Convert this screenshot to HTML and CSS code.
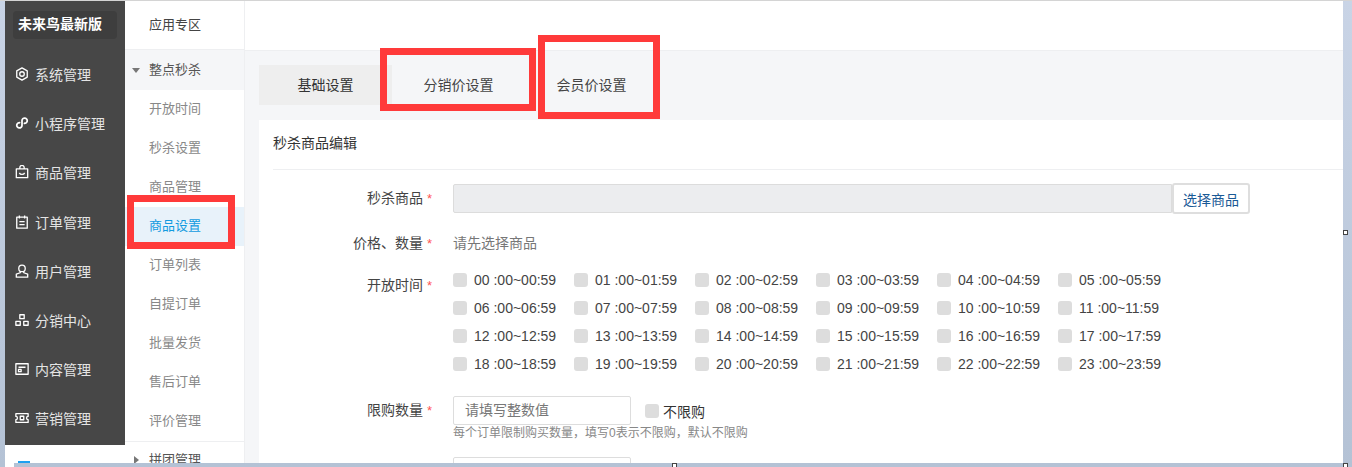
FILE: index.html
```html
<!DOCTYPE html>
<html lang="zh-CN">
<head>
    <meta charset="UTF-8">
    <meta name="viewport" content="width=device-width, initial-scale=1.0">
    <title>秒杀商品编辑</title>
    <link rel="stylesheet" href="styles.css">
</head>
<body>
    <div class="window">
        <!-- Sidebar -->
        <div class="side">
            <div class="side-dark">
                <div class="logo">未来鸟最新版</div>
                <ul class="side-menu">
                    <li>
                        <svg viewBox="0 0 16 16"><path d="M8 1l6 3.500v7L8 15l-6-3.500v-7z"/><circle cx="8" cy="8" r="2.600"/></svg>
                        系统管理
                    </li>
                    <li>
                        <svg viewBox="0 0 16 16"><path d="M6 7.800A3 3 0 1 0 8 10.700V5.300A3 3 0 1 1 10 8.200" stroke-width="2"/></svg>
                        小程序管理
                    </li>
                    <li>
                        <svg viewBox="0 0 16 16"><path d="M1.500 4.500h13v10h-13z"/><path d="M5.500 4.500V3a2.500 2.500 0 0 1 5 0v1.500"/><path d="M5 9c1 2.400 5 2.400 6 0"/></svg>
                        商品管理
                    </li>
                    <li>
                        <svg viewBox="0 0 16 16"><path d="M2 2.500h12v12.500H2z"/><path d="M5 .5v3.500M11 .5v3.500M5 7.500h6M5 11h6"/></svg>
                        订单管理
                    </li>
                    <li>
                        <svg viewBox="0 0 16 16"><circle cx="8" cy="5" r="3.700"/><path d="M6 8.500v1.500L1.500 11.500v3.500h13v-3.500L10 10V8.500"/></svg>
                        用户管理
                    </li>
                    <li>
                        <svg viewBox="0 0 16 16"><path d="M5.500 2h5v4.500h-5zM1 9.500h5v4.500H1zM10 9.500h5v4.500h-5z"/></svg>
                        分销中心
                    </li>
                    <li>
                        <svg viewBox="0 0 16 16"><path d="M1 2h14v12H1z"/><path d="M4 6h8M4 8.500h3v2.500H4z"/></svg>
                        内容管理
                    </li>
                    <li>
                        <svg viewBox="0 0 16 16"><path d="M1 3h14v3.200a1.800 1.800 0 0 0 0 3.600V13H1V9.800a1.800 1.800 0 0 0 0-3.600z"/><path d="M6 6h4v4H6z"/></svg>
                        营销管理
                    </li>
                </ul>
            </div>
            <div class="side-more"></div>
        </div>

        <!-- Sub menu -->
        <div class="subnav">
            <div class="subnav-head">应用专区</div>
            <div class="subnav-group open"><i class="arrow-down"></i>整点秒杀</div>
            <a class="subnav-item" href="#">开放时间</a>
            <a class="subnav-item" href="#">秒杀设置</a>
            <a class="subnav-item" href="#">商品管理</a>
            <a class="subnav-item active" href="#">商品设置</a>
            <a class="subnav-item" href="#">订单列表</a>
            <a class="subnav-item" href="#">自提订单</a>
            <a class="subnav-item" href="#">批量发货</a>
            <a class="subnav-item" href="#">售后订单</a>
            <a class="subnav-item" href="#">评价管理</a>
            <div class="subnav-group closed"><i class="arrow-right"></i>拼团管理</div>
        </div>

        <!-- Main Content -->
        <div class="main">
            <div class="topbar"></div>
            <div class="content">
                <div class="tabs">
                    <div class="tab active">基础设置</div>
                    <div class="tab">分销价设置</div>
                    <div class="tab">会员价设置</div>
                </div>
                <div class="card">
                    <div class="card-title">秒杀商品编辑</div>

                    <div class="form-row row-goods">
                        <label class="form-label">秒杀商品<span class="star">*</span></label>
                        <div class="goods-input"></div>
                        <button class="goods-btn">选择商品</button>
                    </div>

                    <div class="form-row row-price">
                        <label class="form-label">价格、数量<span class="star">*</span></label>
                        <span class="muted">请先选择商品</span>
                    </div>

                    <div class="form-row row-time">
                        <label class="form-label">开放时间<span class="star">*</span></label>
                        <div class="time-grid">
                            <div class="time-item"><i class="check"></i>00 :00~00:59</div>
                            <div class="time-item"><i class="check"></i>01 :00~01:59</div>
                            <div class="time-item"><i class="check"></i>02 :00~02:59</div>
                            <div class="time-item"><i class="check"></i>03 :00~03:59</div>
                            <div class="time-item"><i class="check"></i>04 :00~04:59</div>
                            <div class="time-item"><i class="check"></i>05 :00~05:59</div>
                            <div class="time-item"><i class="check"></i>06 :00~06:59</div>
                            <div class="time-item"><i class="check"></i>07 :00~07:59</div>
                            <div class="time-item"><i class="check"></i>08 :00~08:59</div>
                            <div class="time-item"><i class="check"></i>09 :00~09:59</div>
                            <div class="time-item"><i class="check"></i>10 :00~10:59</div>
                            <div class="time-item"><i class="check"></i>11 :00~11:59</div>
                            <div class="time-item"><i class="check"></i>12 :00~12:59</div>
                            <div class="time-item"><i class="check"></i>13 :00~13:59</div>
                            <div class="time-item"><i class="check"></i>14 :00~14:59</div>
                            <div class="time-item"><i class="check"></i>15 :00~15:59</div>
                            <div class="time-item"><i class="check"></i>16 :00~16:59</div>
                            <div class="time-item"><i class="check"></i>17 :00~17:59</div>
                            <div class="time-item"><i class="check"></i>18 :00~18:59</div>
                            <div class="time-item"><i class="check"></i>19 :00~19:59</div>
                            <div class="time-item"><i class="check"></i>20 :00~20:59</div>
                            <div class="time-item"><i class="check"></i>21 :00~21:59</div>
                            <div class="time-item"><i class="check"></i>22 :00~22:59</div>
                            <div class="time-item"><i class="check"></i>23 :00~23:59</div>
                        </div>
                    </div>

                    <div class="form-row row-limit">
                        <label class="form-label">限购数量<span class="star">*</span></label>
                        <div>
                            <div class="limit-line">
                                <div class="text-input">请填写整数值</div>
                                <div class="limit-check"><i class="check"></i>不限购</div>
                            </div>
                            <p class="hint">每个订单限制购买数量，填写0表示不限购，默认不限购</p>
                            <div class="text-input next-input"></div>
                        </div>
                    </div>
                </div>
            </div>
        </div>
    </div>

    <!-- Annotations on the screenshot -->
    <div class="mark mark-item"></div>
    <div class="mark mark-tab1"></div>
    <div class="mark mark-tab2"></div>

    <!-- Resize handles -->
    <div class="patch"></div>
    <div class="handle handle-right"></div>
    <div class="handle handle-bottom"></div>
    <div class="handle handle-corner"></div>
</body>
</html>
```

FILE: styles.css
```css
* {
    margin: 0;
    padding: 0;
    box-sizing: border-box;
    font-family: "Liberation Sans", "Noto Sans CJK SC", sans-serif;
}

body {
    width: 1352px;
    height: 467px;
    overflow: hidden;
    position: relative;
    padding: 0 9px 4px 5px;
    border-top: 1px solid #d4d4d4;
    background: linear-gradient(#c9d4e6, #b4c2d5);
}

.window {
    display: flex;
    height: 100%;
    background-color: white;
    overflow: hidden;
}

/* Sidebar */
.side {
    width: 120px;
    flex-shrink: 0;
}

.side-dark {
    height: 444px;
    background-color: #474747;
    padding-top: 10px;
}

.logo {
    width: 104px;
    height: 28px;
    margin-left: 8px;
    border-radius: 4px;
    background-color: #3e3e3e;
    color: white;
    font-size: 14px;
    font-weight: bold;
    line-height: 26px;
    padding-left: 5px;
}

.side-menu {
    list-style: none;
    margin-top: 10.500px;
}

.side-menu li {
    height: 49.200px;
    display: flex;
    align-items: center;
    gap: 6px;
    padding-left: 10px;
    color: #e4e4e4;
    font-size: 14px;
}

.side-menu svg {
    width: 14px;
    height: 14px;
    flex-shrink: 0;
    fill: none;
    stroke: white;
    stroke-width: 1.500;
    stroke-linejoin: round;
}

.side-more {
    width: 12px;
    height: 2px;
    margin: 16px 0 0 13px;
    border-top: 2px dashed #1ea0f0;
}

/* Sub menu */
.subnav {
    width: 120px;
    flex-shrink: 0;
    border-right: 1px solid #eeeff1;
    font-size: 13px;
}

.subnav-head {
    height: 49px;
    line-height: 47px;
    padding-left: 24px;
    color: #444;
    border-bottom: 1px solid #eeeff1;
}

.subnav-group {
    height: 40px;
    line-height: 40px;
    padding-left: 24px;
    color: #555;
    position: relative;
}

.subnav-group.open {
    background-color: #f5f6f8;
}

.subnav-group.closed {
    border-top: 1px solid #eeeff1;
    line-height: 36px;
}

.arrow-down {
    position: absolute;
    left: 7px;
    top: 18px;
    border-left: 4px solid transparent;
    border-right: 4px solid transparent;
    border-top: 5px solid #777;
}

.arrow-right {
    position: absolute;
    left: 9px;
    top: 14px;
    border-top: 4px solid transparent;
    border-bottom: 4px solid transparent;
    border-left: 5px solid #777;
}

.subnav-item {
    display: block;
    height: 39px;
    line-height: 37px;
    padding-left: 24px;
    color: #888;
    text-decoration: none;
}

.subnav-item.active {
    background-color: #e8f2fa;
    color: #129be0;
}

/* Main Content */
.main {
    flex-grow: 1;
    min-width: 0;
}

.topbar {
    height: 50px;
    border-bottom: 1px solid #eeeff1;
}

.content {
    height: 412px;
    background-color: #f5f6f8;
    padding: 14px 0 0 14px;
}

.tabs {
    display: flex;
    height: 40px;
    margin-bottom: 15px;
}

.tab {
    width: 133px;
    text-align: center;
    line-height: 40px;
    font-size: 14px;
    color: #444;
}

.tab.active {
    background-color: #eeeeee;
    color: #333;
}

.card {
    height: 360px;
    background-color: white;
    padding-left: 14px;
    font-size: 14px;
    color: #333;
}

.card-title {
    height: 50px;
    line-height: 46px;
    border-bottom: 1px solid #eeeff1;
    margin-bottom: 14px;
}

.form-row {
    display: flex;
    align-items: flex-start;
}

.form-label {
    width: 180px;
    flex-shrink: 0;
    padding-right: 21px;
    text-align: right;
    color: #444;
}

.star {
    color: #f55;
    margin-left: 4px;
    font-size: 13px;
}

/* Goods row */
.row-goods {
    height: 30px;
    margin-bottom: 15px;
}

.row-goods .form-label {
    line-height: 28px;
}

.goods-input {
    width: 719px;
    height: 29px;
    background-color: #ecedef;
    border: 1px solid #dcdcdc;
    border-radius: 2px 0 0 2px;
}

.goods-btn {
    width: 78px;
    height: 31px;
    margin-top: -1px;
    background-color: white;
    border: 2px solid #dedede;
    border-radius: 3px;
    color: #1a5a96;
    font-size: 14px;
}

.row-price {
    height: 37px;
    line-height: 28px;
}

.muted {
    color: #777;
    font-size: 14px;
}

/* Time checkboxes */
.row-time {
    height: 130px;
}

.row-time .form-label {
    line-height: 38px;
}

.time-grid {
    display: grid;
    grid-template-columns: repeat(6, 121px);
    grid-auto-rows: 28px;
}

.time-item {
    display: flex;
    align-items: center;
    gap: 7px;
    color: #444;
}

.check {
    width: 14px;
    height: 14px;
    flex-shrink: 0;
    border-radius: 3px;
    background-color: #dddddd;
}

/* Limit row */
.row-limit .form-label {
    line-height: 28px;
}

.limit-line {
    display: flex;
    align-items: center;
    gap: 14px;
}

.text-input {
    width: 178px;
    height: 29px;
    line-height: 27px;
    padding-left: 11px;
    border: 1px solid #dddddd;
    border-radius: 2px;
    color: #777;
}

.limit-check {
    display: flex;
    align-items: center;
    gap: 4px;
    color: #333;
}

.hint {
    font-size: 12px;
    line-height: 16px;
    color: #888;
}

.next-input {
    margin-top: 16px;
}

/* Annotations */
.mark {
    position: absolute;
    border: 7px solid #ff3a3a;
}

.mark-item {
    left: 127px;
    top: 194px;
    width: 108px;
    height: 54px;
}

.mark-tab1 {
    left: 380px;
    top: 47px;
    width: 156px;
    height: 63px;
}

.mark-tab2 {
    left: 538px;
    top: 34px;
    width: 122px;
    height: 84px;
}

/* Resize handles */
.patch {
    position: absolute;
    left: 5px;
    top: 462px;
    width: 9px;
    height: 4px;
    background-color: white;
}

.handle {
    position: absolute;
    width: 5px;
    height: 5px;
    background-color: white;
    border: 1px solid #444;
}

.handle-right {
    left: 1343px;
    top: 229px;
}

.handle-bottom {
    left: 672px;
    top: 462px;
}

.handle-corner {
    left: 1343px;
    top: 462px;
}
```
